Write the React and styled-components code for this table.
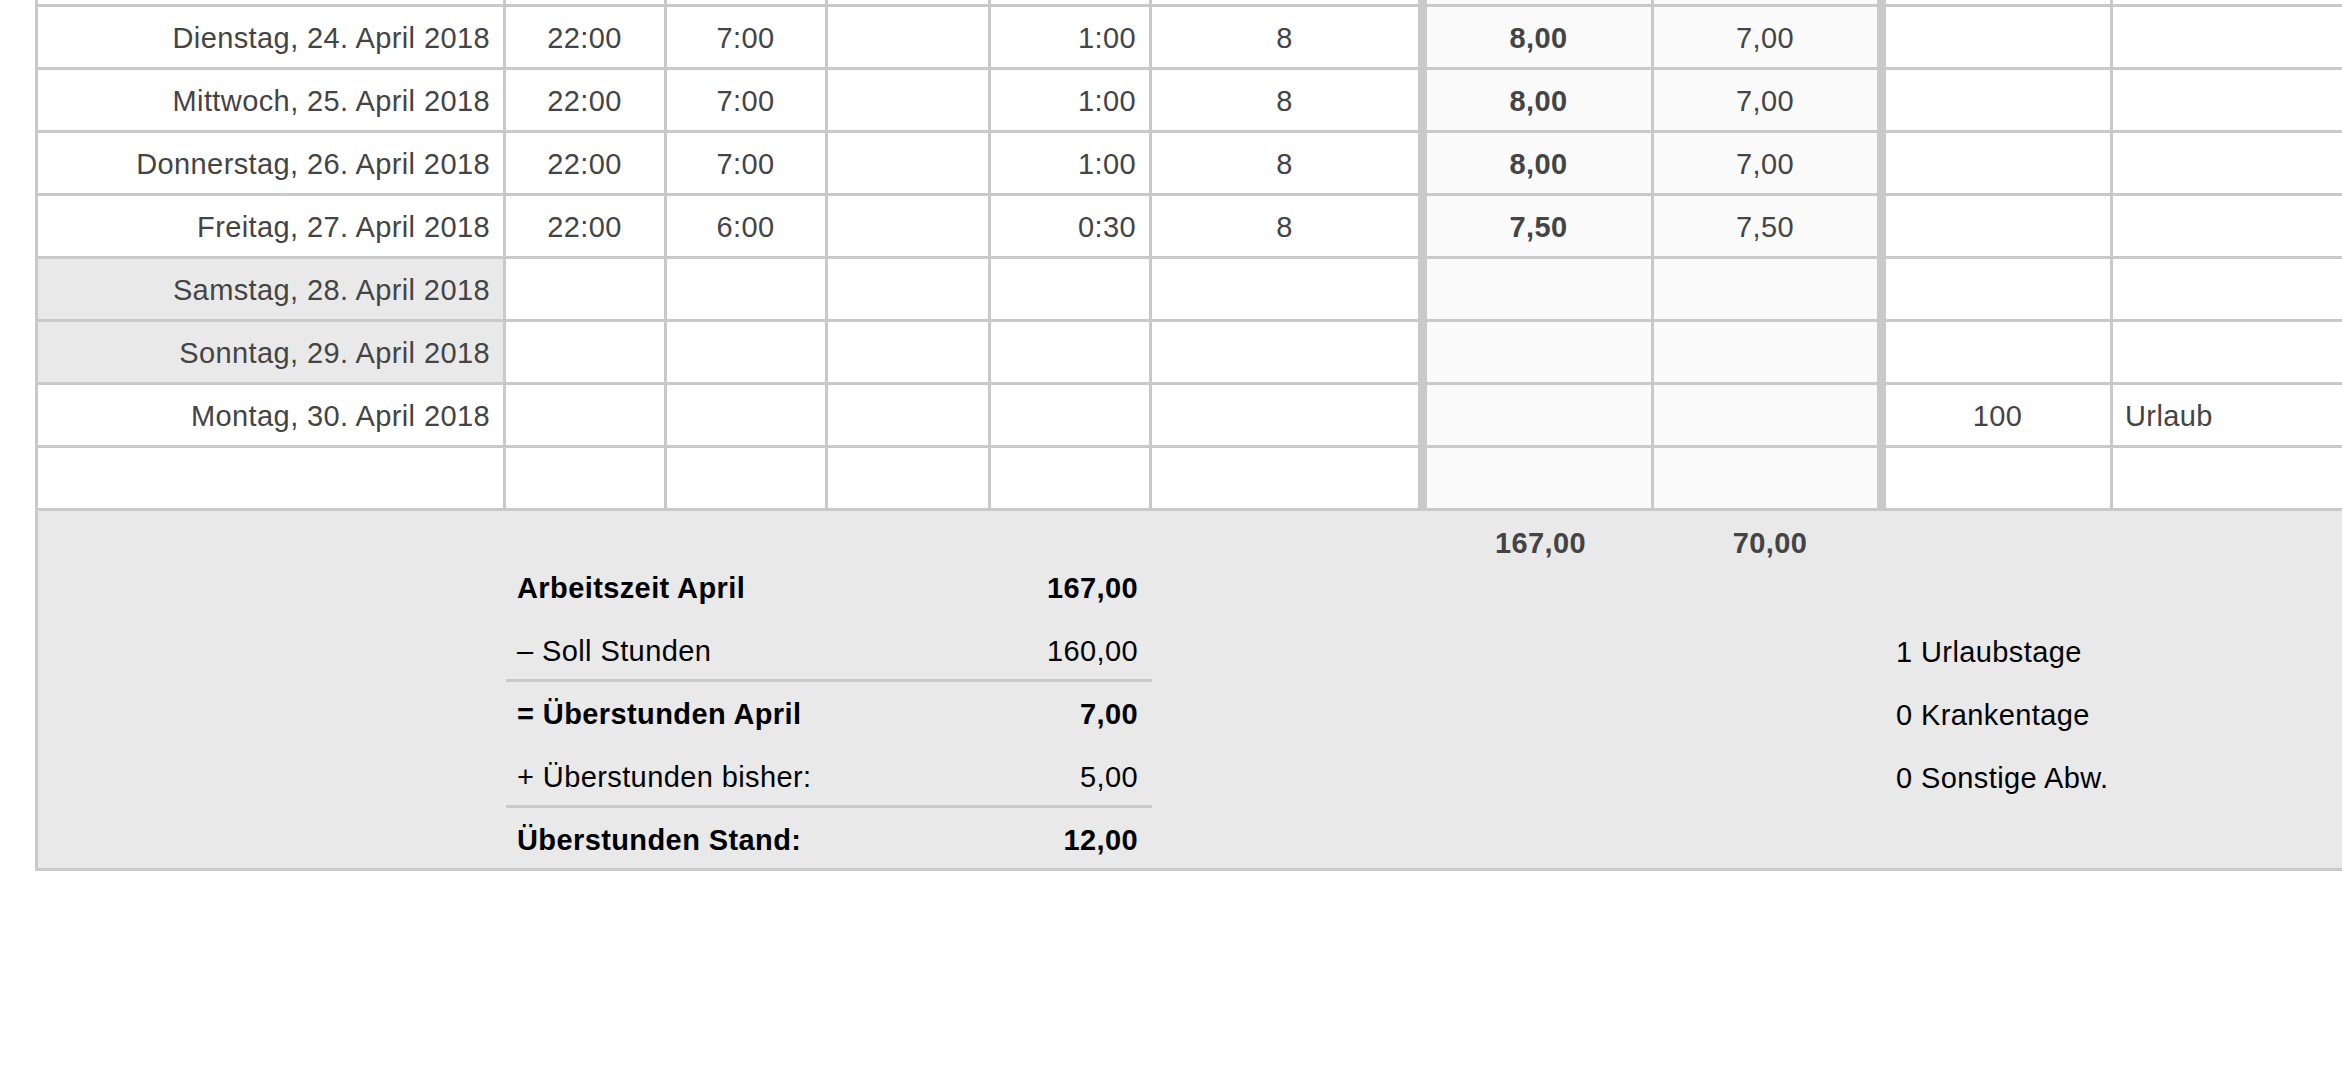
import React from "react";
import styled, { createGlobalStyle } from "styled-components";

const GlobalStyle = createGlobalStyle`
  html, body {
    margin: 0;
    padding: 0;
    background: #fff;
    overflow: hidden;
  }
  body {
    font-family: "Liberation Sans", Arial, Helvetica, sans-serif;
  }
`;

// column widths incl. right border of each cell
const COLS = "468px 161px 161px 163px 161px 275px 227px 232px 227px 300px";
const LINE = "#c9c9c9";

const Viewport = styled.div`
    height: 100vh;
    overflow: hidden;
    padding-left: 35px;
`;

// first row is scrolled out of view, only its grid lines peek in at the top
const Sheet = styled.div`
    width: max-content;
    margin-top: -56px;
    border-left: 3px solid ${LINE};
    font-size: 29px;
    letter-spacing: 0.4px;
    color: #444;
`;

const Row = styled.div`
    display: grid;
    grid-template-columns: ${COLS};
`;

const justify = {
    left: "flex-start",
    right: "flex-end",
    center: "center",
};

const Cell = styled.div`
    box-sizing: border-box;
    height: 63px;
    display: flex;
    align-items: center;
    justify-content: ${props => justify[props.$align || "center"]};
    padding: 3px 13px 0 12px;
    border-bottom: 3px solid ${LINE};
    border-right: ${props => props.$thick ? 9 : 3}px solid ${LINE};
    background: ${props => props.$weekend ? "#e9e9e9" : props.$tinted ? "#fafafa" : "#fff"};
    font-weight: ${props => props.$bold ? 700 : 400};
    white-space: nowrap;
`;

const Footer = styled.div`
    display: grid;
    grid-template-columns: ${COLS};
    align-items: start;
    background: #e9e9e9;
    border-bottom: 3px solid ${LINE};
`;

const Total = styled.div`
    grid-row: 1;
    grid-column: ${props => props.$col};
    box-sizing: border-box;
    height: 60px;
    padding-top: 4px;
    display: flex;
    align-items: center;
    justify-content: center;
    font-weight: 700;
    color: #444;
`;

const Summary = styled.div`
    grid-row: 1;
    grid-column: 2 / 6;
    padding-top: 45px;
    color: #000;
`;

const SumRow = styled.div`
    box-sizing: border-box;
    height: 63px;
    display: flex;
    align-items: center;
    justify-content: space-between;
    padding: 4px 14px 0 11px;
    border-bottom: 3px solid ${props => props.$rule ? LINE : "transparent"};
    font-weight: ${props => props.$bold ? 700 : 400};

    &:last-child {
        height: 60px;
        border-bottom: 0;
    }
`;

const Absences = styled.div`
    grid-row: 1;
    grid-column: 9 / 11;
    padding-top: 108px;
    color: #000;
`;

const AbsenceLine = styled.div`
    box-sizing: border-box;
    height: 63px;
    display: flex;
    align-items: center;
    padding: 3px 0 0 10px;
    white-space: nowrap;
`;

const days = [
    { day: "" },
    { day: "Dienstag, 24. April 2018", from: "22:00", to: "7:00", pause: "1:00", target: "8", worked: "8,00", over: "7,00" },
    { day: "Mittwoch, 25. April 2018", from: "22:00", to: "7:00", pause: "1:00", target: "8", worked: "8,00", over: "7,00" },
    { day: "Donnerstag, 26. April 2018", from: "22:00", to: "7:00", pause: "1:00", target: "8", worked: "8,00", over: "7,00" },
    { day: "Freitag, 27. April 2018", from: "22:00", to: "6:00", pause: "0:30", target: "8", worked: "7,50", over: "7,50" },
    { day: "Samstag, 28. April 2018", weekend: true },
    { day: "Sonntag, 29. April 2018", weekend: true },
    { day: "Montag, 30. April 2018", percent: "100", note: "Urlaub" },
    { day: "" },
];

const summary = [
    { label: "Arbeitszeit April", value: "167,00", bold: true },
    { label: "– Soll Stunden", value: "160,00", rule: true },
    { label: "= Überstunden April", value: "7,00", bold: true },
    { label: "+ Überstunden bisher:", value: "5,00", rule: true },
    { label: "Überstunden Stand:", value: "12,00", bold: true },
];

function DayRow({ d }) {
    return (
        <Row>
            <Cell $align="right" $weekend={d.weekend}>{d.day}</Cell>
            <Cell>{d.from}</Cell>
            <Cell>{d.to}</Cell>
            <Cell />
            <Cell $align="right">{d.pause}</Cell>
            <Cell $thick>{d.target}</Cell>
            <Cell $tinted $bold>{d.worked}</Cell>
            <Cell $tinted $thick>{d.over}</Cell>
            <Cell>{d.percent}</Cell>
            <Cell $align="left">{d.note}</Cell>
        </Row>
    );
}

export default function App() {
    return (
        <>
            <GlobalStyle />
            <Viewport>
                <Sheet>
                    {days.map((d, i) => <DayRow key={i} d={d} />)}
                    <Footer>
                        <Summary>
                            {summary.map(s => (
                                <SumRow key={s.label} $bold={s.bold} $rule={s.rule}>
                                    <span>{s.label}</span>
                                    <span>{s.value}</span>
                                </SumRow>
                            ))}
                        </Summary>
                        <Total $col={7}>167,00</Total>
                        <Total $col={8}>70,00</Total>
                        <Absences>
                            <AbsenceLine>1 Urlaubstage</AbsenceLine>
                            <AbsenceLine>0 Krankentage</AbsenceLine>
                            <AbsenceLine>0 Sonstige Abw.</AbsenceLine>
                        </Absences>
                    </Footer>
                </Sheet>
            </Viewport>
        </>
    );
}
